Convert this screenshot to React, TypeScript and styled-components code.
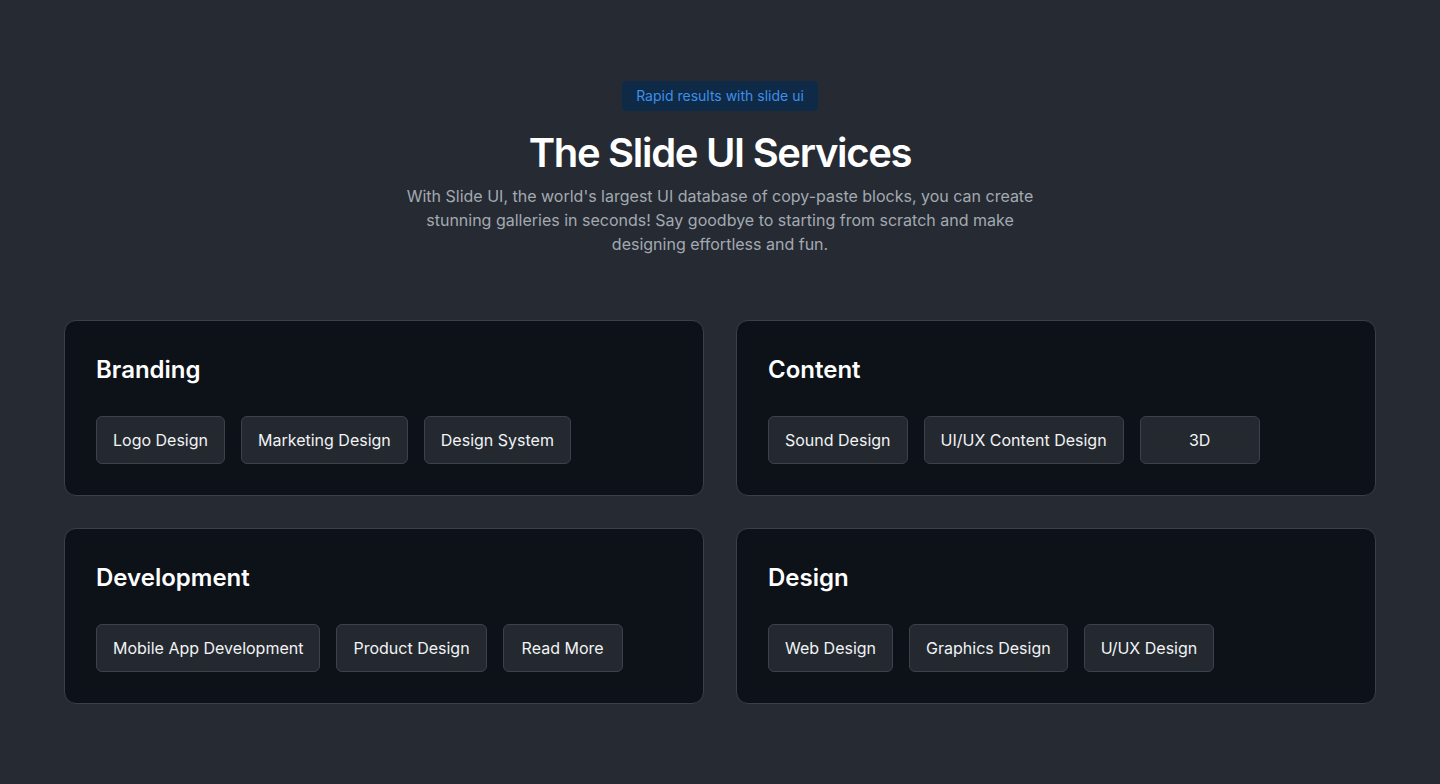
import React from "react";
import styled, { createGlobalStyle } from "styled-components";

const GlobalStyle = createGlobalStyle`
  html, body {
    margin: 0;
    padding: 0;
    background-color: #262b33;
    font-family: Inter, "Noto Sans", sans-serif;
  }
`;

const Page = styled.section`
  min-height: 784px;
  box-sizing: border-box;
  padding: 81px 64px 80px;
  background-color: #262b33;
`;

const Header = styled.header`
  display: flex;
  flex-direction: column;
  align-items: center;
  text-align: center;
`;

const Badge = styled.span`
  display: inline-block;
  padding: 0 14px;
  height: 30px;
  line-height: 30px;
  border-radius: 4px;
  background-color: #0f2a47;
  color: #3d8fe8;
  font-size: 14px;
`;

const Title = styled.h2`
  margin: 18px 0 0;
  font-size: 40px;
  line-height: 48px;
  font-weight: 600;
  letter-spacing: -1.3px;
  color: #ffffff;
`;

const Lead = styled.p`
  margin: 7px 0 0;
  max-width: 640px;
  font-size: 16px;
  line-height: 24px;
  color: #a3a9b1;
`;

const Grid = styled.div`
  display: grid;
  grid-template-columns: repeat(2, 1fr);
  gap: 32px;
  margin-top: 64px;
`;

const Card = styled.article`
  background-color: #0d1118;
  border: 1px solid #3a4049;
  border-radius: 12px;
  padding: 31px;
`;

const CardTitle = styled.h3`
  margin: 2px 0 0;
  font-size: 24px;
  line-height: 32px;
  font-weight: 600;
  color: #ffffff;
`;

const Chips = styled.div`
  display: flex;
  gap: 16px;
  margin-top: 30px;
`;

const Chip = styled.button`
  min-width: 120px;
  height: 48px;
  padding: 0 16px;
  box-sizing: border-box;
  border: 1px solid #3c424b;
  border-radius: 6px;
  background-color: #242930;
  color: #f1f3f5;
  font-family: Inter, "Noto Sans", sans-serif;
  font-size: 16px;
  cursor: pointer;
`;

const services = [
  { title: "Branding", items: ["Logo Design", "Marketing Design", "Design System"] },
  { title: "Content", items: ["Sound Design", "UI/UX Content Design", "3D"] },
  { title: "Development", items: ["Mobile App Development", "Product Design", "Read More"] },
  { title: "Design", items: ["Web Design", "Graphics Design", "U/UX Design"] },
];

const App = () => {
  return (
    <>
      <GlobalStyle />
      <Page>
        <Header>
          <Badge>Rapid results with slide ui</Badge>
          <Title>The Slide UI Services</Title>
          <Lead>
            With Slide UI, the world's largest UI database of copy-paste blocks, you can create
            stunning galleries in seconds! Say goodbye to starting from scratch and make
            designing effortless and fun.
          </Lead>
        </Header>
        <Grid>
          {services.map((s) => (
            <Card key={s.title}>
              <CardTitle>{s.title}</CardTitle>
              <Chips>
                {s.items.map((item) => (
                  <Chip key={item}>{item}</Chip>
                ))}
              </Chips>
            </Card>
          ))}
        </Grid>
      </Page>
    </>
  );
};

export default App;
